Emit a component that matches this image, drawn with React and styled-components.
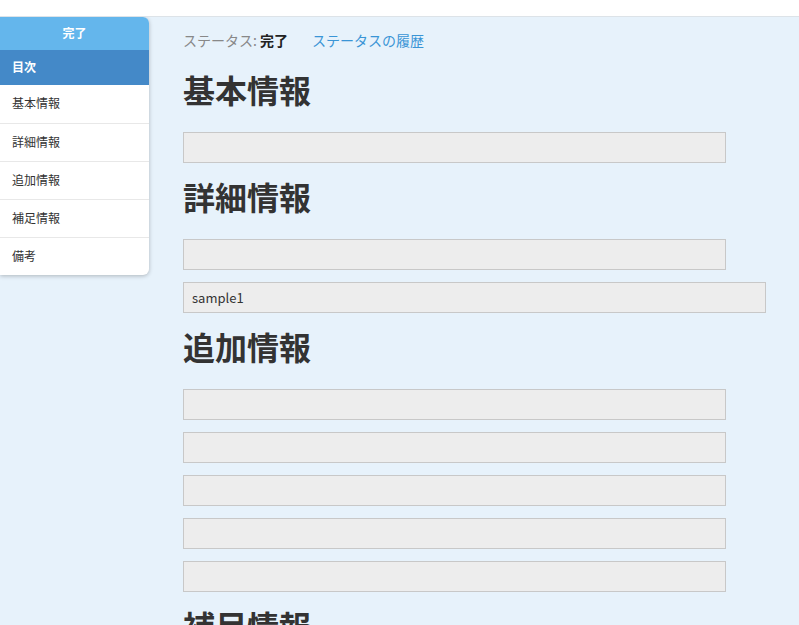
import React from 'react';
import styled, { createGlobalStyle } from 'styled-components';

const GlobalStyle = createGlobalStyle`
  html, body { margin: 0; padding: 0; background: #fff; }
  body { font-family: "Noto Sans CJK JP", "Noto Sans", sans-serif; color: #333; }
`;

const Page = styled.div`
  margin-top: 16px;
  height: 609px;
  overflow: hidden;
  background: #e7f2fb;
  border-top: 1px solid #dde3e8;
  position: relative;
`;

const Toc = styled.nav`
  position: absolute;
  left: 0;
  top: 0;
  width: 149px;
  background: #fff;
  border-radius: 0 6px 6px 0;
  box-shadow: 0 1px 4px rgba(0, 0, 0, 0.25);
  overflow: hidden;
  font-size: 12px;
`;

const TocStatus = styled.div`
  background: #64b6ec;
  color: #fff;
  font-weight: bold;
  text-align: center;
  height: 33px;
  line-height: 31px;
`;

const TocTitle = styled.div`
  background: #4489c8;
  color: #fff;
  font-weight: bold;
  height: 35px;
  line-height: 33px;
  padding-left: 12px;
`;

const TocItem = styled.div`
  box-sizing: border-box;
  height: 38px;
  line-height: 36px;
  padding-left: 12px;
  color: #333;
  border-top: ${p => (p.first ? 'none' : '1px solid #e8e8e8')};
`;

const Main = styled.main`
  padding: 12px 0 0 183px;
`;

const StatusLine = styled.div`
  font-size: 14px;
  line-height: 22px;
  display: flex;
  gap: 24px;
`;

const Label = styled.span`
  color: #888;
  b { color: #222; font-weight: bold; }
`;

const HistoryLink = styled.a`
  color: #3a95d6;
  text-decoration: none;
`;

const Heading = styled.h2`
  font-size: 32px;
  font-weight: bold;
  line-height: 42px;
  margin: ${p => (p.first ? '17px' : '9px')} 0 22px;
  color: #333;
`;

const Field = styled.div`
  box-sizing: border-box;
  width: ${p => (p.wide ? '583px' : '543px')};
  height: 31px;
  background: #ededed;
  border: 1px solid #c8c8c8;
  margin-bottom: 12px;
  padding-left: 8px;
  font-size: 13px;
  line-height: 29px;
  color: #333;
`;

const items = ['基本情報', '詳細情報', '追加情報', '補足情報', '備考'];

export default function App() {
  return (
    <>
      <GlobalStyle />
      <Page>
        <Main>
          <StatusLine>
            <Label>ステータス: <b>完了</b></Label>
            <HistoryLink href="#">ステータスの履歴</HistoryLink>
          </StatusLine>
          <Heading first>基本情報</Heading>
          <Field />
          <Heading>詳細情報</Heading>
          <Field />
          <Field wide>sample1</Field>
          <Heading>追加情報</Heading>
          <Field />
          <Field />
          <Field />
          <Field />
          <Field />
          <Heading>補足情報</Heading>
        </Main>
        <Toc>
          <TocStatus>完了</TocStatus>
          <TocTitle>目次</TocTitle>
          {items.map((t, i) => (
            <TocItem key={t} first={i === 0}>{t}</TocItem>
          ))}
        </Toc>
      </Page>
    </>
  );
}
